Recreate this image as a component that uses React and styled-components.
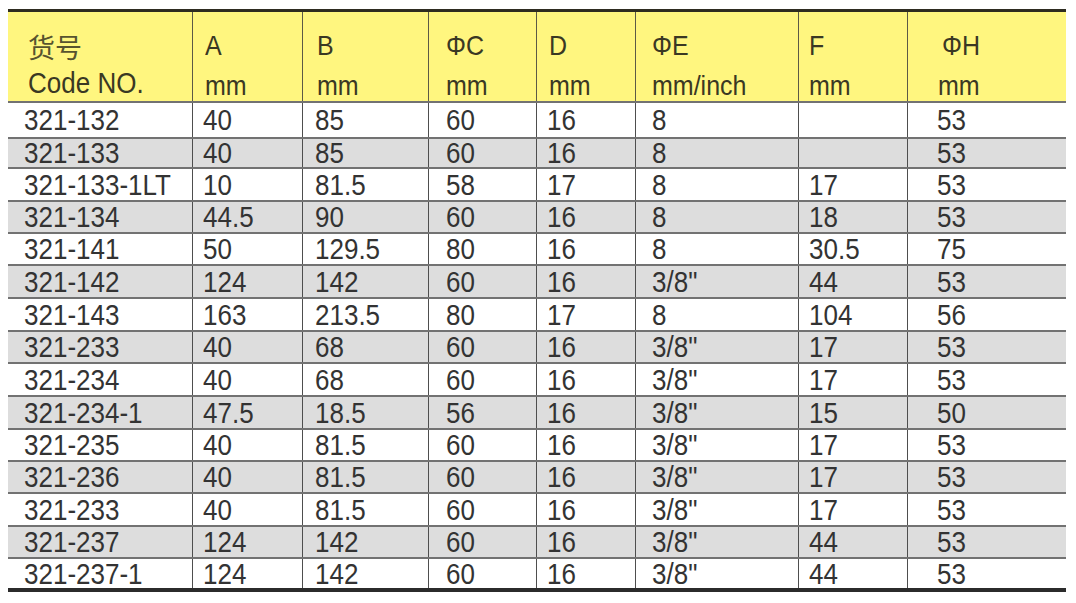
import React from 'react';
import styled, { createGlobalStyle } from 'styled-components';

const GlobalStyle = createGlobalStyle`
  html, body {
    margin: 0;
    padding: 0;
    background: #ffffff;
  }
  body {
    font-family: "Liberation Sans", Arial, sans-serif;
  }
`;

const COLS = '184px 110px 126px 108px 99px 163px 109px 159px';
const HEAD_PAD = [20, 12, 14, 17, 12, 16, 10, 30];
const BODY_PAD = [16, 10, 12, 17, 10, 16, 10, 29];

const Page = styled.div`
  width: 1076px;
  height: 603px;
  padding: 9px 0 0 8px;
  box-sizing: border-box;
  background: #fff;
`;

const Sheet = styled.div`
  width: 1058px;
  display: flex;
  flex-direction: column;
  border-top: 3px solid #2e2c20;
  border-bottom: 4px solid #2b2b2b;
`;

const HeadRow = styled.div`
  display: grid;
  grid-template-columns: ${COLS};
  height: 89px;
  background: #fff67f;
`;

const HeadCell = styled.div`
  display: flex;
  flex-direction: column;
  padding-top: ${p => (p.$code ? 16 : 13)}px;
  padding-left: ${p => p.$pad}px;
  border-left: ${p => (p.$first ? 'none' : '1.5px solid #5c5a45')};
  color: #3a3823;
  font-size: 25px;
`;

const HeadLine = styled.span`
  display: block;
  height: 40px;
  line-height: 40px;
  white-space: nowrap;
  transform: scaleY(1.12);
  margin-left: ${p => p.$shift || 0}px;
`;

const CnLine = styled.span`
  display: block;
  height: 38px;
  line-height: 38px;
  font-family: "Noto Sans CJK SC", "Liberation Sans", sans-serif;
  font-size: 27px;
  color: #57532f;
`;

const CodeLine = styled.span`
  display: block;
  height: 34px;
  line-height: 34px;
  font-size: 26px;
  white-space: nowrap;
  transform: scaleY(1.1);
`;

const Row = styled.div`
  display: grid;
  grid-template-columns: ${COLS};
  height: ${p => p.$h}px;
  box-sizing: border-box;
  border-top: 2px solid #727272;
  background: ${p => (p.$alt ? '#dddddd' : '#ffffff')};
`;

const Cell = styled.div`
  display: flex;
  align-items: center;
  padding-left: ${p => p.$pad}px;
  border-left: ${p => (p.$first ? 'none' : '1.5px solid #4e4e4e')};
`;

const Value = styled.span`
  display: inline-block;
  font-size: 26px;
  line-height: 26px;
  color: #333333;
  white-space: nowrap;
  transform: scaleY(1.13);
`;

const headers = [
  ['A', 'mm'],
  ['B', 'mm'],
  ['\u03A6C', 'mm'],
  ['D', 'mm'],
  ['\u03A6E', 'mm/inch'],
  ['F', 'mm'],
  ['\u03A6H', 'mm'],
];

const rows = [
  ['321-132', '40', '85', '60', '16', '8', '', '53'],
  ['321-133', '40', '85', '60', '16', '8', '', '53'],
  ['321-133-1LT', '10', '81.5', '58', '17', '8', '17', '53'],
  ['321-134', '44.5', '90', '60', '16', '8', '18', '53'],
  ['321-141', '50', '129.5', '80', '16', '8', '30.5', '75'],
  ['321-142', '124', '142', '60', '16', '3/8"', '44', '53'],
  ['321-143', '163', '213.5', '80', '17', '8', '104', '56'],
  ['321-233', '40', '68', '60', '16', '3/8"', '17', '53'],
  ['321-234', '40', '68', '60', '16', '3/8"', '17', '53'],
  ['321-234-1', '47.5', '18.5', '56', '16', '3/8"', '15', '50'],
  ['321-235', '40', '81.5', '60', '16', '3/8"', '17', '53'],
  ['321-236', '40', '81.5', '60', '16', '3/8"', '17', '53'],
  ['321-233', '40', '81.5', '60', '16', '3/8"', '17', '53'],
  ['321-237', '124', '142', '60', '16', '3/8"', '44', '53'],
  ['321-237-1', '124', '142', '60', '16', '3/8"', '44', '53'],
];

const heights = [36, 30, 33, 32, 32, 33, 33, 32, 33, 33, 32, 32, 33, 32, 31];

export default function App() {
  return (
    <Page>
      <GlobalStyle />
      <Sheet>
        <HeadRow>
          <HeadCell $first $code $pad={HEAD_PAD[0]}>
            <CnLine>货号</CnLine>
            <CodeLine>Code NO.</CodeLine>
          </HeadCell>
          {headers.map(([label, unit], i) => (
            <HeadCell key={label} $pad={HEAD_PAD[i + 1]}>
              <HeadLine $shift={i === 6 ? 4 : 0}>{label}</HeadLine>
              <HeadLine>{unit}</HeadLine>
            </HeadCell>
          ))}
        </HeadRow>
        {rows.map((row, r) => (
          <Row key={r} $alt={r % 2 === 1} $h={heights[r]}>
            {row.map((v, c) => (
              <Cell key={c} $first={c === 0} $pad={BODY_PAD[c]}>
                <Value>{v}</Value>
              </Cell>
            ))}
          </Row>
        ))}
      </Sheet>
    </Page>
  );
}
